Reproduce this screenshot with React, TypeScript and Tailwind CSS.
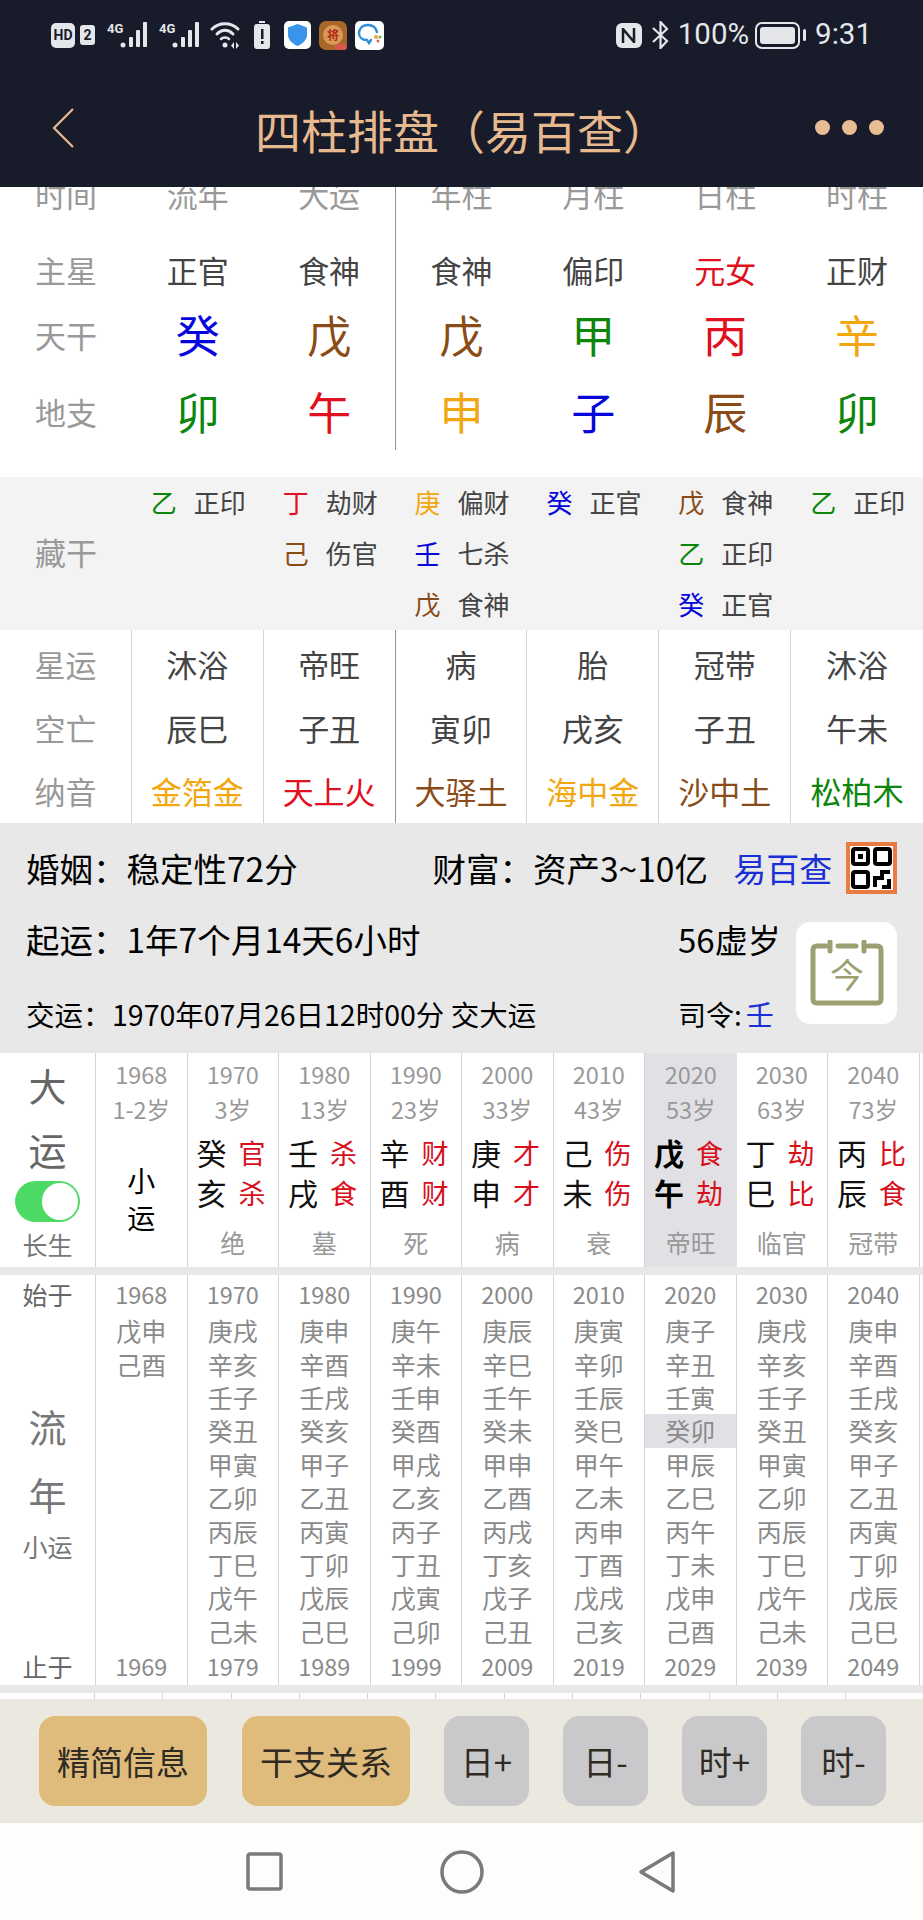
const brown = "text-[#8a4b16]";
const blue = "text-[#0606dc]";
const green = "text-[#0b860b]";
const red = "text-[#e01020]";
const orange = "text-[#f2a70f]";

const topRows = [
  {
    label: "时间",
    rowClass: "h-[51px] pb-[38px]",
    cellClass: "text-[31px] text-[#999]",
    cells: [
      ["流年", ""],
      ["大运", ""],
      ["年柱", ""],
      ["月柱", ""],
      ["日柱", ""],
      ["时柱", ""],
    ],
  },
  {
    label: "主星",
    rowClass: "h-[66px] pb-[4px]",
    cellClass: "text-[31px] text-[#444]",
    cells: [
      ["正官", ""],
      ["食神", ""],
      ["食神", ""],
      ["偏印", ""],
      ["元女", red],
      ["正财", ""],
    ],
  },
  {
    label: "天干",
    rowClass: "h-[66px] pb-[6px]",
    cellClass: "text-[44px]",
    cells: [
      ["癸", blue],
      ["戊", brown],
      ["戊", brown],
      ["甲", green],
      ["丙", red],
      ["辛", orange],
    ],
  },
  {
    label: "地支",
    rowClass: "h-[80px] pt-[2px]",
    cellClass: "text-[44px]",
    cells: [
      ["卯", green],
      ["午", red],
      ["申", orange],
      ["子", blue],
      ["辰", brown],
      ["卯", green],
    ],
  },
];

const hidden = [
  [["乙", green, "正印"]],
  [
    ["丁", red, "劫财"],
    ["己", brown, "伤官"],
  ],
  [
    ["庚", orange, "偏财"],
    ["壬", blue, "七杀"],
    ["戊", brown, "食神"],
  ],
  [["癸", blue, "正官"]],
  [
    ["戊", brown, "食神"],
    ["乙", green, "正印"],
    ["癸", blue, "正官"],
  ],
  [["乙", green, "正印"]],
];

const lowerRows = [
  { label: "星运", rowClass: "h-[67px] pb-[1px]", cells: [["沐浴", ""], ["帝旺", ""], ["病", ""], ["胎", ""], ["冠带", ""], ["沐浴", ""]] },
  { label: "空亡", rowClass: "h-[64px] pb-[4px]", cells: [["辰巳", ""], ["子丑", ""], ["寅卯", ""], ["戌亥", ""], ["子丑", ""], ["午未", ""]] },
  { label: "纳音", rowClass: "h-[62px] pb-[4px]", cells: [["金箔金", orange], ["天上火", red], ["大驿土", brown], ["海中金", orange], ["沙中土", brown], ["松柏木", green]] },
];

const luck = [
  { year: "1970", age: "3岁", a: "癸", at: "官", b: "亥", bt: "杀", star: "绝" },
  { year: "1980", age: "13岁", a: "壬", at: "杀", b: "戌", bt: "食", star: "墓" },
  { year: "1990", age: "23岁", a: "辛", at: "财", b: "酉", bt: "财", star: "死" },
  { year: "2000", age: "33岁", a: "庚", at: "才", b: "申", bt: "才", star: "病" },
  { year: "2010", age: "43岁", a: "己", at: "伤", b: "未", bt: "伤", star: "衰" },
  { year: "2020", age: "53岁", a: "戊", at: "食", b: "午", bt: "劫", star: "帝旺", active: true },
  { year: "2030", age: "63岁", a: "丁", at: "劫", b: "巳", bt: "比", star: "临官" },
  { year: "2040", age: "73岁", a: "丙", at: "比", b: "辰", bt: "食", star: "冠带" },
];

const seq1970 = ["庚戌", "辛亥", "壬子", "癸丑", "甲寅", "乙卯", "丙辰", "丁巳", "戊午", "己未"];
const seq1980 = ["庚申", "辛酉", "壬戌", "癸亥", "甲子", "乙丑", "丙寅", "丁卯", "戊辰", "己巳"];

const years = [
  { from: "1968", to: "1969", list: ["戊申", "己酉"] },
  { from: "1970", to: "1979", list: seq1970 },
  { from: "1980", to: "1989", list: seq1980 },
  { from: "1990", to: "1999", list: ["庚午", "辛未", "壬申", "癸酉", "甲戌", "乙亥", "丙子", "丁丑", "戊寅", "己卯"] },
  { from: "2000", to: "2009", list: ["庚辰", "辛巳", "壬午", "癸未", "甲申", "乙酉", "丙戌", "丁亥", "戊子", "己丑"] },
  { from: "2010", to: "2019", list: ["庚寅", "辛卯", "壬辰", "癸巳", "甲午", "乙未", "丙申", "丁酉", "戊戌", "己亥"] },
  { from: "2020", to: "2029", list: ["庚子", "辛丑", "壬寅", "癸卯", "甲辰", "乙巳", "丙午", "丁未", "戊申", "己酉"] },
  { from: "2030", to: "2039", list: seq1970 },
  { from: "2040", to: "2049", list: seq1980 },
];

function Signal() {
  return (
    <svg width="43" height="28" viewBox="0 0 43 28" className="text-[#e4e6ea]">
      <text x="0" y="12" fontSize="13" fontWeight="700" fill="currentColor" fontFamily="Roboto, sans-serif">
        4G
      </text>
      <circle cx="16" cy="24" r="2.5" fill="currentColor" />
      <rect x="22" y="16" width="4" height="10" rx="1" fill="currentColor" />
      <rect x="29" y="9" width="4" height="17" rx="1" fill="currentColor" />
      <rect x="36" y="1" width="4" height="25" rx="1" fill="currentColor" />
    </svg>
  );
}

function StatusBar() {
  return (
    <div className="h-[75px] pb-[5px] pl-[51px] pr-[51px] flex items-center text-[#e4e6ea]">
      <span className="w-[24px] h-[25px] rounded-[5px] bg-[#e4e6ea] text-[#181b29] text-[14px] font-bold flex items-center justify-center font-['Roboto',sans-serif]">
        HD
      </span>
      <span className="ml-[5px] w-[15px] h-[20px] rounded-[3px] bg-[#e4e6ea] text-[#181b29] text-[14px] font-bold flex items-center justify-center font-['Roboto',sans-serif]">
        2
      </span>
      <div className="ml-[12px]">
        <Signal />
      </div>
      <div className="ml-[9px]">
        <Signal />
      </div>
      <svg width="30" height="28" viewBox="0 0 30 28" className="ml-[8px]" fill="none" stroke="currentColor" strokeLinecap="round">
        <path d="M2 8 C9 1 21 1 28 8" strokeWidth="3" />
        <path d="M7 13 C12 8 18 8 23 13" strokeWidth="3" />
        <path d="M11 18 C13 16 17 16 19 18" strokeWidth="2.5" />
        <circle cx="15" cy="24" r="2.5" fill="currentColor" stroke="none" />
        <path d="M24 21 L21 24.5 L24 28 Z M26 21 L29 24.5 L26 28 Z" fill="currentColor" stroke="none" />
      </svg>
      <svg width="16" height="28" viewBox="0 0 16 28" className="ml-[14px]">
        <rect x="5" y="0" width="6" height="2" fill="#e4e6ea" />
        <rect x="0" y="3" width="16" height="25" rx="3" fill="#e4e6ea" />
        <rect x="7" y="8" width="2.5" height="10" fill="#181b29" />
        <rect x="7" y="20" width="2.5" height="3" fill="#181b29" />
      </svg>
      <div className="ml-[14px] w-[27px] h-[28px] rounded-[5px] bg-white flex items-center justify-center">
        <svg width="19" height="22" viewBox="0 0 19 22">
          <path d="M9.5 0 L19 3.5 V11 C19 16 14 20 9.5 22 C5 20 0 16 0 11 V3.5 Z" fill="#3a95ea" />
        </svg>
      </div>
      <div className="ml-[8px] w-[28px] h-[29px] rounded-[7px] bg-[#a8682c] flex items-center justify-center relative">
        <div className="w-[20px] h-[20px] rounded-full bg-[#d99a55] text-[12px] leading-none text-[#b3261e] flex items-center justify-center font-bold">
          将
        </div>
        <span className="absolute right-0 bottom-0 w-[12px] h-[6px] bg-[#d9574a] rounded-[3px]" />
      </div>
      <div className="ml-[8px] w-[29px] h-[29px] rounded-[5px] bg-white flex items-center justify-center">
        <svg width="25" height="24" viewBox="0 0 25 24" fill="none">
          <path d="M11 2 C5 2 2 6 2 10 C2 14 5 17 10 17 L12 20 L14 17" stroke="#2f8fd8" strokeWidth="2.4" strokeLinecap="round" />
          <path d="M11 2 C16 2 19 5 20 9" stroke="#2f8fd8" strokeWidth="2.4" strokeLinecap="round" />
          <circle cx="19" cy="14" r="2" fill="#e8a33d" />
          <circle cx="23" cy="14" r="1.6" fill="#6cc04a" />
          <circle cx="21" cy="18" r="1.6" fill="#e06a5a" />
        </svg>
      </div>

      <div className="ml-auto flex items-center">
        <svg width="26" height="25" viewBox="0 0 26 25">
          <rect x="0" y="0" width="26" height="25" rx="6" fill="#e4e6ea" />
          <path d="M7 5 V20 M7 6 L18 19 M18 5 V20" stroke="#181b29" strokeWidth="2.5" fill="none" />
        </svg>
        <svg width="19" height="28" viewBox="0 0 19 28" className="ml-[9px]" fill="none" stroke="currentColor" strokeWidth="2.2">
          <path d="M2 7 L16 20 L9.5 27 V1 L16 8 L2 21" />
        </svg>
        <span className="ml-[8px] text-[29.5px] leading-none font-['Roboto',sans-serif]">100%</span>
        <div className="ml-[6px] w-[45px] h-[27px] rounded-[7px] border-2 border-[#e4e6ea] p-[3px]">
          <div className="w-full h-full rounded-[3px] bg-[#e4e6ea]" />
        </div>
        <span className="ml-[3px] w-[3px] h-[12px] rounded-sm bg-[#e4e6ea]" />
        <span className="ml-[9px] text-[29.5px] leading-none font-['Roboto',sans-serif]">9:31</span>
      </div>
    </div>
  );
}

function Header() {
  return (
    <div className="relative z-10 bg-[#181b29]">
      <StatusBar />
      <div className="h-[112px] flex items-center pl-[52px] pr-[39px]">
        <svg width="22" height="40" viewBox="0 0 22 40" fill="none" stroke="#e6b98f" strokeWidth="2.2" className="mb-[7px]">
          <path d="M21 1 L2 20 L21 39" />
        </svg>
        <h1 className="ml-[181px] mb-[4px] text-[46px] leading-none font-normal text-[#e6b98f]">四柱排盘（易百查）</h1>
        <div className="ml-auto mb-[7px] flex gap-[12px]">
          <span className="w-[15px] h-[15px] rounded-full bg-[#e9bd93]" />
          <span className="w-[15px] h-[15px] rounded-full bg-[#e9bd93]" />
          <span className="w-[15px] h-[15px] rounded-full bg-[#e9bd93]" />
        </div>
      </div>
    </div>
  );
}

function ChartTop() {
  return (
    <div className="bg-white pb-[27px]">
      {topRows.map((row) => (
        <div key={row.label} className="grid grid-cols-7">
          <div className={`${row.rowClass} flex items-center justify-center text-[31px] leading-none text-[#999]`}>{row.label}</div>
          {row.cells.map(([text, color], i) => (
            <div
              key={i}
              className={`${row.rowClass} ${row.cellClass} ${color} ${i === 1 ? "border-r border-[#8f9499]" : ""} flex items-center justify-center leading-none`}
            >
              {text}
            </div>
          ))}
        </div>
      ))}
    </div>
  );
}

function HiddenStems() {
  return (
    <div className="h-[153px] overflow-hidden bg-[#f3f3f3] grid grid-cols-7">
      <div className="pb-[4px] flex items-center justify-center text-[31px] leading-none text-[#999]">藏干</div>
      {hidden.map((col, i) => (
        <div key={i} className="pl-[19px]">
          {col.map(([stem, color, name]) => (
            <div key={stem + name} className="h-[51px] pb-[1px] flex items-center text-[26px] leading-none">
              <span className={`w-[43px] ${color}`}>{stem}</span>
              <span className="text-[#444]">{name}</span>
            </div>
          ))}
        </div>
      ))}
    </div>
  );
}

function ChartLower() {
  return (
    <div className="bg-white">
      {lowerRows.map((row) => (
        <div key={row.label} className="grid grid-cols-7">
          <div className={`${row.rowClass} border-r border-[#d4d4d4] flex items-center justify-center text-[31px] leading-none text-[#999]`}>
            {row.label}
          </div>
          {row.cells.map(([text, color], i) => (
            <div
              key={i}
              className={`${row.rowClass} ${color || "text-[#444]"} ${i === 1 ? "border-r border-[#8f9499]" : i < 5 ? "border-r border-[#d4d4d4]" : ""} flex items-center justify-center text-[31px] leading-none`}
            >
              {text}
            </div>
          ))}
        </div>
      ))}
    </div>
  );
}

function QrIcon() {
  return (
    <div className="w-[51px] h-[52px] border-[4px] border-[#ea7c42] bg-white flex items-center justify-center">
      <svg width="41" height="42" viewBox="0 0 41 42" fill="none" stroke="#000" strokeWidth="4">
        <rect x="2" y="2" width="15" height="15" rx="2" />
        <rect x="24" y="2" width="15" height="15" rx="2" />
        <rect x="2" y="25" width="15" height="15" rx="2" />
        <rect x="7" y="7" width="5" height="5" fill="#000" stroke="none" />
        <path d="M24 40 V31 H31 V25 H39 M38 32 V40 H31" />
      </svg>
    </div>
  );
}

function InfoPanel() {
  return (
    <div className="h-[230px] bg-[#e8e8e8] px-[26px] text-black">
      <div className="h-[90px] flex items-center text-[33.5px] leading-none">
        <span className="w-[407px]">婚姻：稳定性72分</span>
        <span className="w-[301px]">财富：资产3~10亿</span>
        <span className="w-[113px] text-[#1b2fd6] text-[33px]">易百查</span>
        <QrIcon />
      </div>
      <div className="grid grid-cols-[652px_118px_101px] grid-rows-[56px_84px]">
        <div className="pb-[4px] flex items-center text-[33.5px] leading-none">起运：1年7个月14天6小时</div>
        <div className="pb-[4px] flex items-center text-[33px] leading-none">56虚岁</div>
        <div className="row-span-2 mt-[9px] w-[101px] h-[102px] rounded-[14px] bg-white flex items-center justify-center">
          <svg width="74" height="66" viewBox="0 0 74 66" fill="none" stroke="#9ca070" strokeWidth="5" strokeLinecap="round">
            <path d="M16 6 H7 Q3 6 3 10 V59 Q3 63 7 63 H67 Q71 63 71 59 V10 Q71 6 67 6 H58" />
            <path d="M20 2 V11 M54 2 V11 M28 6 H46" />
            <text x="37" y="48" fontSize="34" fill="#9ca070" stroke="none" textAnchor="middle" fontFamily="'Noto Sans CJK SC', sans-serif">
              今
            </text>
          </svg>
        </div>
        <div className="pt-[6px] flex items-center text-[28.5px] leading-none">
          <span className="w-[86px]">交运：</span>
          <span>1970年07月26日12时00分 交大运</span>
        </div>
        <div className="pt-[6px] flex items-center text-[28px] leading-none">
          司令:<span className="ml-[4px] text-[#1b2fd6]">壬</span>
        </div>
      </div>
    </div>
  );
}

function LuckTable() {
  return (
    <div className="h-[214px] bg-white grid grid-cols-[96px_repeat(9,91.5px)]">
      <div className="border-r border-[#d4d4d4] flex flex-col items-center">
        <div className="h-[66px] pb-[2px] flex items-center text-[38px] leading-none text-[#666]">大</div>
        <div className="h-[60px] flex items-center text-[38px] leading-none text-[#666]">运</div>
        <div className="mt-[2px] w-[65px] h-[41px] rounded-full bg-[#4cd964] flex items-center justify-end p-[2px]">
          <span className="w-[36px] h-[37px] rounded-full bg-white" />
        </div>
        <div className="h-[44px] flex items-center text-[25px] leading-none text-[#777]">长生</div>
      </div>
      <div className="border-r border-[#d4d4d4] flex flex-col items-center text-[#999]">
        <div className="h-[48px] pb-[4px] flex items-center text-[23.5px] leading-none">1968</div>
        <div className="h-[24px] pb-[6px] flex items-center text-[23.5px] leading-none">1-2岁</div>
        <div className="mt-[36px] h-[37px] flex items-center text-[28px] leading-none text-black">小</div>
        <div className="h-[37px] flex items-center text-[28px] leading-none text-black">运</div>
      </div>
      {luck.map((c) => (
        <div key={c.year} className={`${c.active ? "bg-[#e1e1e5]" : "border-r border-[#d4d4d4]"} flex flex-col text-[#999]`}>
          <div className="h-[48px] pb-[4px] flex items-center justify-center text-[23.5px] leading-none">{c.year}</div>
          <div className="h-[24px] pb-[6px] flex items-center justify-center text-[23.5px] leading-none">{c.age}</div>
          <div className="mt-[7px] h-[40px] pl-[9px] flex items-center leading-none">
            <span className={`w-[42px] text-[30px] ${c.active ? "font-bold text-black" : "text-[#111]"}`}>{c.a}</span>
            <span className="text-[27px] text-[#d8101c]">{c.at}</span>
          </div>
          <div className="h-[40px] pl-[9px] flex items-center leading-none">
            <span className={`w-[42px] text-[30px] ${c.active ? "font-bold text-black" : "text-[#111]"}`}>{c.b}</span>
            <span className="text-[27px] text-[#d8101c]">{c.bt}</span>
          </div>
          <div className="h-[55px] pt-[6px] flex items-center justify-center text-[25px] leading-none">{c.star}</div>
        </div>
      ))}
    </div>
  );
}

function YearsTable() {
  return (
    <div className="h-[410px] bg-white grid grid-cols-[96px_repeat(9,91.5px)]">
      <div className="border-r border-[#d4d4d4] flex flex-col items-center">
        <div className="h-[39px] flex items-center text-[25px] leading-none text-[#666]">始于</div>
        <div className="mt-[78px] h-[68px] flex items-center text-[38px] leading-none text-[#777]">流</div>
        <div className="h-[68px] flex items-center text-[38px] leading-none text-[#777]">年</div>
        <div className="h-[36px] flex items-center text-[25px] leading-none text-[#777]">小运</div>
        <div className="mt-[84px] h-[37px] flex items-center text-[25px] leading-none text-[#666]">止于</div>
      </div>
      {years.map((col) => (
        <div key={col.from} className="border-r border-[#d4d4d4] flex flex-col text-[#8a8a8a]">
          <div className="h-[39px] flex items-center justify-center text-[23.5px] leading-none">{col.from}</div>
          <div className="h-[334px]">
            {col.list.map((item) => (
              <div
                key={item}
                className={`h-[33.4px] flex items-center justify-center text-[25px] leading-none ${col.from === "2020" && item === "癸卯" ? "bg-[#e1e1e5]" : ""}`}
              >
                {item}
              </div>
            ))}
          </div>
          <div className="h-[37px] flex items-center justify-center text-[23.5px] leading-none">{col.to}</div>
        </div>
      ))}
    </div>
  );
}

function PeekRow() {
  return (
    <div className="h-[6px] bg-white grid grid-cols-[95px_repeat(12,68.3px)]">
      {Array.from({ length: 12 }).map((_, i) => (
        <div key={i} className="border-r border-[#d4d4d4]" />
      ))}
    </div>
  );
}

function BottomBar() {
  const wide = "w-[168px] h-[90px] rounded-[16px] bg-[#e0bc7c] flex items-center justify-center";
  const small = "w-[85px] h-[90px] rounded-[16px] bg-[#c9c9cb] flex items-center justify-center";
  return (
    <div className="h-[124px] bg-[#eae8df] pl-[39px] pt-[17px] flex text-[33px] leading-none text-[#2f2a22]">
      <button className={wide}>精简信息</button>
      <button className={`${wide} ml-[35px]`}>干支关系</button>
      <button className={`${small} ml-[34px]`}>日+</button>
      <button className={`${small} ml-[34px]`}>日-</button>
      <button className={`${small} ml-[34px]`}>时+</button>
      <button className={`${small} ml-[34px]`}>时-</button>
    </div>
  );
}

function NavBar() {
  return (
    <div className="h-[97px] bg-[#fdfdfb] pl-[246px] pt-[27px] flex items-start">
      <svg width="37" height="42" viewBox="0 0 37 42" fill="none" stroke="#7a7a7a" strokeWidth="3.5" className="mt-[2px]">
        <rect x="2" y="2" width="33" height="35" rx="2" />
      </svg>
      <svg width="44" height="44" viewBox="0 0 44 44" fill="none" stroke="#7a7a7a" strokeWidth="3.5" className="ml-[157px]">
        <circle cx="22" cy="22" r="20" />
      </svg>
      <svg width="38" height="44" viewBox="0 0 38 44" fill="none" stroke="#7a7a7a" strokeWidth="3.5" strokeLinejoin="round" className="ml-[154px]">
        <path d="M35 3 V41 L3 22 Z" />
      </svg>
    </div>
  );
}

export default function App() {
  return (
    <div className="w-[923px] h-[1920px] overflow-hidden bg-white font-['Noto_Sans_CJK_SC',sans-serif]">
      <Header />
      <ChartTop />
      <HiddenStems />
      <ChartLower />
      <InfoPanel />
      <LuckTable />
      <div className="h-[8px] bg-[#e8e8e8]" />
      <YearsTable />
      <div className="h-[8px] bg-[#e8e8e8]" />
      <PeekRow />
      <BottomBar />
      <NavBar />
    </div>
  );
}
